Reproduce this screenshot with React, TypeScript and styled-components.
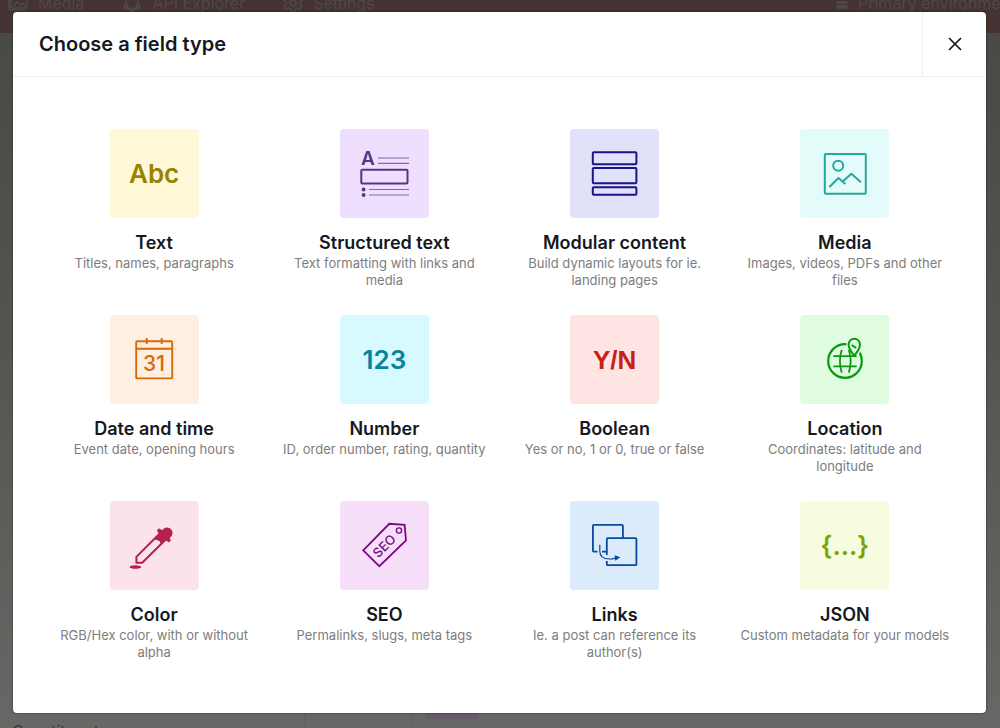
import React from "react";
import styled, { createGlobalStyle } from "styled-components";

const GlobalStyle = createGlobalStyle`
  *, *::before, *::after { box-sizing: border-box; }
  body {
    margin: 0;
    font-family: Inter, "Liberation Sans", sans-serif;
    color: #16181f;
  }
`;

const Page = styled.div`
  position: relative;
  display: flex;
  flex-direction: column;
  min-height: 100vh;
  background: linear-gradient(#484943, #535350 45%, #676765);
`;

const TopBar = styled.header`
  display: flex;
  justify-content: space-between;
  height: 33px;
  padding: 0 0 0 8px;
  overflow: hidden;
  white-space: nowrap;
  background: #453333;
`;

const TopNav = styled.nav`
  display: flex;
  gap: 38px;
  height: 20px;
  margin-top: -7px;
`;

const TopLink = styled.a`
  display: flex;
  align-items: center;
  gap: 10px;
  font-size: 16px;
  line-height: 20px;
  color: #4e4946;
  text-decoration: none;

  svg {
    flex: none;
  }
`;

const Environment = styled(TopLink)`
  width: 164px;
  height: 20px;
  margin-top: -7px;
`;

const Backdrop = styled.div`
  position: absolute;
  inset: 0;
  padding: 12px 14px 14px 13px;
`;

const Dialog = styled.section`
  background: #fff;
  border-radius: 4px;
  box-shadow: 0 0 2px rgba(0, 0, 0, 0.6);
`;

const DialogHeader = styled.header`
  display: flex;
  height: 65px;
  border-bottom: 1px solid #eee;
`;

const DialogTitle = styled.h1`
  flex: 1;
  margin: 0;
  padding-left: 26px;
  font-size: 20px;
  font-weight: 600;
  line-height: 64px;
`;

const CloseButton = styled.button`
  display: flex;
  align-items: center;
  justify-content: center;
  width: 64px;
  padding: 0;
  border: 0;
  border-left: 1px solid #eee;
  background: none;
  color: #16181f;
  cursor: pointer;
`;

const FieldGrid = styled.div`
  display: grid;
  grid-template-columns: repeat(4, 1fr);
  row-gap: 26px;
  padding: 52px 26px;
`;

const FieldCard = styled.button`
  display: flex;
  flex-direction: column;
  align-items: center;
  min-height: 160px;
  padding: 0 8px;
  border: 0;
  background: none;
  font-family: inherit;
  text-align: center;
  cursor: pointer;
`;

const Tile = styled.span<{ $bg: string; $fg: string }>`
  display: flex;
  align-items: center;
  justify-content: center;
  width: 89px;
  height: 89px;
  border-radius: 4px;
  background: ${(p) => p.$bg};
  color: ${(p) => p.$fg};
`;

const Glyphs = styled.span<{ $narrow?: boolean }>`
  font-family: ${(p) => (p.$narrow ? '"Liberation Sans", Arial, sans-serif' : "inherit")};
  font-size: 26px;
  font-weight: 600;
  line-height: 32px;
`;

const FieldName = styled.span`
  margin-top: 13px;
  font-size: 18px;
  font-weight: 600;
  line-height: 24px;
  color: #16181f;
`;

const FieldHint = styled.span`
  font-size: 13px;
  line-height: 17px;
  color: #7d7d7d;
`;

const PageFooter = styled.div`
  display: flex;
  height: 15px;
  margin-top: auto;
  overflow: hidden;
`;

const SideLabel = styled.span`
  width: 305px;
  padding: 8px 0 0 12px;
  border-right: 1px solid #61615f;
  font-size: 16px;
  line-height: 20px;
  color: #3b3b3a;
`;

const ListColumn = styled.span`
  width: 107px;
  border-right: 1px solid #61615f;
`;

const Pill = styled.span`
  width: 54px;
  height: 6px;
  margin-left: 13px;
  border-radius: 0 0 4px 4px;
  background: #655b66;
`;

const Drawing = ({ children }: { children: React.ReactNode }) => (
  <svg width="89" height="89" viewBox="0 0 89 89" fill="none" stroke="currentColor" strokeWidth="2" strokeLinejoin="round" aria-hidden="true">
    {children}
  </svg>
);

const StructuredIcon = () => (
  <Drawing>
    <text x="21" y="36" fontSize="19" fontWeight="600" fill="currentColor" stroke="none">A</text>
    <path d="M38 29h31M38 34.3h31M29 60.5h40M29 66h40" strokeWidth="1.2" opacity="0.7" />
    <rect x="21.3" y="40.8" width="46.2" height="13.6" rx="1" />
    <g fill="currentColor" stroke="none">
      <circle cx="23.6" cy="60.5" r="1.9" />
      <circle cx="23.6" cy="66" r="1.9" />
    </g>
  </Drawing>
);

const ModularIcon = () => (
  <Drawing>
    <rect x="22.8" y="23.3" width="43.6" height="12" rx="1" />
    <rect x="22.8" y="39" width="43.6" height="15.3" rx="1" />
    <rect x="22.8" y="58.2" width="43.6" height="7.6" rx="1" />
  </Drawing>
);

const MediaIcon = () => (
  <Drawing>
    <rect x="24.8" y="25" width="41" height="39.8" rx="1" />
    <circle cx="38.2" cy="36.8" r="5" />
    <path d="M29.4 58 38.4 49l7 6M42.7 52.6 51.4 44.8l9.5 8.4" />
  </Drawing>
);

const CalendarIcon = () => (
  <Drawing>
    <rect x="26.2" y="26.2" width="36" height="37.2" rx="1" strokeWidth="1.9" />
    <path d="M26 33.8h36M36.7 23v6M51.7 23v6" strokeWidth="1.9" />
    <text x="44" y="55.6" textAnchor="middle" fontSize="21" fontWeight="500" fill="currentColor" stroke="none">31</text>
  </Drawing>
);

const LocationIcon = () => (
  <Drawing>
    <circle cx="45" cy="46" r="16.8" strokeWidth="2.2" />
    <path d="M54.3 41.5c-3.6-4.6-5.8-8-5.8-11.6a5.8 5.8 0 0 1 11.6 0c0 3.6-2.2 7-5.8 11.6z" fill="#dffbe0" stroke="#dffbe0" strokeWidth="4.5" />
    <path d="M33.3 41.2h23.4M33.3 51.4h23.4M41.8 34.8q-3.8 11.3 0 22.8M48.8 34.8q3.8 11.3 0 22.8" strokeWidth="1.8" />
    <path d="M54.3 40.6c-3.6-4.4-5.7-7.8-5.7-11.2a5.7 5.7 0 0 1 11.4 0c0 3.4-2.1 6.8-5.7 11.2z" strokeWidth="2" />
    <path d="m51.6 30 4.6 3" />
  </Drawing>
);

const ColorIcon = () => (
  <Drawing>
    <path d="M26.4 61.7v-5.8L49.5 32.8l6 6L32.2 61.7z" strokeWidth="2" />
    <path d="m44.5 38.5 5.2-5.4-1.9-1.9a2 2 0 0 1 2.8-2.9l1.5 1a5.6 5.6 0 1 1 7.6 7.6l.4 1a1.9 1.9 0 0 1-2.7 2.7l-1.8-1.6-5 5.2q1-4.8-6.1-5.7z" fill="currentColor" stroke="none" />
    <ellipse cx="25.4" cy="66" rx="5.8" ry="1.7" fill="currentColor" stroke="none" />
  </Drawing>
);

const SeoIcon = () => (
  <Drawing>
    <path d="M23.2 49.3 49.3 22.8l15.3 1.1L66 39.3 39.3 65.2z" strokeWidth="1.8" strokeLinejoin="miter" />
    <circle cx="59" cy="29.5" r="2.6" strokeWidth="1.4" />
    <text x="44.3" y="49.6" transform="rotate(-45 44.3 45)" textAnchor="middle" fontSize="13" fontWeight="500" fill="currentColor" stroke="none">SEO</text>
  </Drawing>
);

const LinksIcon = () => (
  <Drawing>
    <path d="M27.5 50.6h-3.6a1 1 0 0 1-1-1V24.9a1 1 0 0 1 1-1h28a1 1 0 0 1 1 1v12M32 50.6h4.5M36.8 54V38.2a1 1 0 0 1 1-1h27.6a1 1 0 0 1 1 1v25a1 1 0 0 1-1 1H37.8a1 1 0 0 1-1-1V60" strokeWidth="1.8" />
    <path d="M29.8 43.8v6.5q0 7.7 9.7 7.7 3 0 6-.9" strokeWidth="1.2" />
    <path d="m44.6 54.2 5.8 2-5.2 3.6z" fill="currentColor" stroke="none" />
  </Drawing>
);

type Field = { name: string; hint: string; bg: string; fg: string; icon: React.ReactNode };

const fields: Field[] = [
  { name: "Text", hint: "Titles, names, paragraphs", bg: "#fff8d6", fg: "#998200", icon: <Glyphs>Abc</Glyphs> },
  { name: "Structured text", hint: "Text formatting with links and media", bg: "#eedfff", fg: "#583580", icon: <StructuredIcon /> },
  { name: "Modular content", hint: "Build dynamic layouts for ie. landing pages", bg: "#e1e1fa", fg: "#181587", icon: <ModularIcon /> },
  { name: "Media", hint: "Images, videos, PDFs and other files", bg: "#e3fbf9", fg: "#24a89e", icon: <MediaIcon /> },
  { name: "Date and time", hint: "Event date, opening hours", bg: "#ffefe2", fg: "#d96808", icon: <CalendarIcon /> },
  { name: "Number", hint: "ID, order number, rating, quantity", bg: "#d6faff", fg: "#07839a", icon: <Glyphs>123</Glyphs> },
  { name: "Boolean", hint: "Yes or no, 1 or 0, true or false", bg: "#fee5e4", fg: "#c92014", icon: <Glyphs $narrow>Y/N</Glyphs> },
  { name: "Location", hint: "Coordinates: latitude and longitude", bg: "#dffbe0", fg: "#07990f", icon: <LocationIcon /> },
  { name: "Color", hint: "RGB/Hex color, with or without alpha", bg: "#fce2ea", fg: "#b5204f", icon: <ColorIcon /> },
  { name: "SEO", hint: "Permalinks, slugs, meta tags", bg: "#f7dffa", fg: "#780a82", icon: <SeoIcon /> },
  { name: "Links", hint: "Ie. a post can reference its author(s)", bg: "#dcebfc", fg: "#07499a", icon: <LinksIcon /> },
  { name: "JSON", hint: "Custom metadata for your models", bg: "#f6fcdd", fg: "#76a505", icon: <Glyphs>{"{...}"}</Glyphs> },
];

const navProps = { width: 20, height: 20, viewBox: "0 0 20 20", fill: "none", stroke: "currentColor", strokeWidth: 1.6 };

export default function App() {
  return (
    <>
      <GlobalStyle />
      <Page>
        <TopBar>
          <TopNav>
            <TopLink href="#media">
              <svg {...navProps}><rect x="3" y="3" width="16" height="12" rx="1" /><path d="M1 6v11h16M5 13l4-4 3 3 2-2 4 4" /></svg>
              Media
            </TopLink>
            <TopLink href="#api">
              <svg {...navProps}><path d="m10 2 6 4v8l-6 4-6-4V6z" /><circle cx="4" cy="14" r="2" /><circle cx="16" cy="14" r="2" /><circle cx="10" cy="17" r="2" /></svg>
              API Explorer
            </TopLink>
            <TopLink href="#settings">
              <svg {...navProps}><circle cx="10" cy="10" r="3" /><path d="M8 1h4v3l2 1 3-1 2 3-2 2v2l2 2-2 3-3-1-2 1v3H8v-3l-2-1-3 1-2-3 2-2V9L1 7l2-3 3 1 2-1z" /></svg>
              Settings
            </TopLink>
          </TopNav>
          <Environment href="#environment">
            <svg width="12" height="20" viewBox="0 0 12 20" fill="currentColor" aria-hidden="true"><rect y="4" width="12" height="3" rx="1" /><rect y="8" width="12" height="3" rx="1" /><rect y="12" width="12" height="4" rx="2" /></svg>
            Primary environment
          </Environment>
        </TopBar>
        <PageFooter>
          <SideLabel>Constituent</SideLabel>
          <ListColumn />
          <Pill />
        </PageFooter>
        <Backdrop>
          <Dialog role="dialog" aria-modal="true" aria-labelledby="dialog-title">
            <DialogHeader>
              <DialogTitle id="dialog-title">Choose a field type</DialogTitle>
              <CloseButton type="button" aria-label="Close">
                <svg width="14" height="14" viewBox="0 0 14 14" fill="none" stroke="currentColor" strokeWidth="1.7" aria-hidden="true">
                  <path d="m1 1 12 12M13 1 1 13" />
                </svg>
              </CloseButton>
            </DialogHeader>
            <FieldGrid>
              {fields.map((f) => (
                <FieldCard type="button" key={f.name}>
                  <Tile $bg={f.bg} $fg={f.fg}>{f.icon}</Tile>
                  <FieldName>{f.name}</FieldName>
                  <FieldHint>{f.hint}</FieldHint>
                </FieldCard>
              ))}
            </FieldGrid>
          </Dialog>
        </Backdrop>
      </Page>
    </>
  );
}
